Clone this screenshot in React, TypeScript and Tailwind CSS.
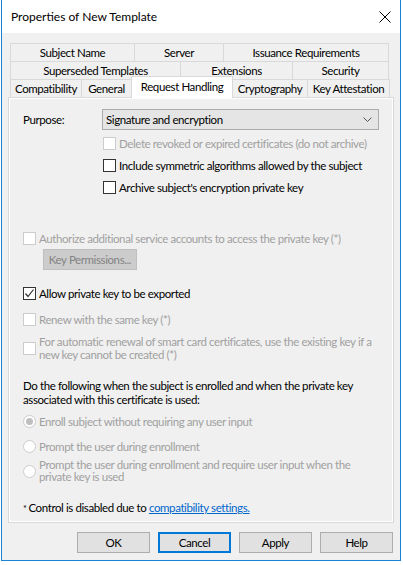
import { ReactNode } from 'react';

const FONT = "font-['Lato',sans-serif]";
const BODY = 'text-[11.5px] tracking-[-0.4px]';

function CheckBox({ checked, disabled }: { checked?: boolean; disabled?: boolean }) {
  return (
    <div
      className={`w-[13px] h-[13px] shrink-0 border bg-white flex items-center justify-center ${
        disabled ? 'border-[#cccccc]' : 'border-[#333333]'
      }`}
    >
      {checked && (
        <svg width="11" height="11" viewBox="0 0 11 11">
          <path d="M1.5 5.5 L4 8.5 L9.5 1.5" fill="none" stroke="#333" strokeWidth="1.2" />
        </svg>
      )}
    </div>
  );
}

function Radio({ checked }: { checked?: boolean }) {
  return (
    <div className="w-[13px] h-[13px] shrink-0 rounded-full border border-[#cccccc] bg-white flex items-center justify-center">
      {checked && <div className="w-[7px] h-[7px] rounded-full bg-[#bfbfbf]" />}
    </div>
  );
}

function CheckRow({
  children,
  checked,
  disabled,
  className = '',
}: {
  children: ReactNode;
  checked?: boolean;
  disabled?: boolean;
  className?: string;
}) {
  return (
    <div className={`flex items-center gap-[3px] ${className}`}>
      <CheckBox checked={checked} disabled={disabled} />
      <span className={`leading-[13px] whitespace-nowrap ${disabled ? 'text-[#a0a0a0]' : 'text-black'}`}>
        {children}
      </span>
    </div>
  );
}

function RadioRow({ children, checked, className = '' }: { children: ReactNode; checked?: boolean; className?: string }) {
  return (
    <div className={`flex items-center gap-[3px] text-[#a0a0a0] whitespace-nowrap ${className}`}>
      <Radio checked={checked} />
      <span className="leading-[12px]">{children}</span>
    </div>
  );
}

function Tab({ label, w, selected }: { label: string; w: number; selected?: boolean }) {
  return (
    <div
      style={{ width: w }}
      className={`flex items-center justify-center whitespace-nowrap border-l border-t border-r border-[#d9d9d9] -mr-px ${
        selected ? 'h-[22px] bg-white relative z-10 -mb-px pb-[3px]' : 'h-[18px] bg-[#f0f0f0]'
      }`}
    >
      {label}
    </div>
  );
}

function Button({ label, focused }: { label: string; focused?: boolean }) {
  return (
    <div
      className={`w-[73px] h-[21px] flex items-center justify-center bg-[#e1e1e1] ${
        focused ? 'border-2 border-[#0078d7]' : 'border border-[#adadad]'
      }`}
    >
      {label}
    </div>
  );
}

export default function App() {
  return (
    <div className={`w-[403px] h-[565px] bg-white overflow-hidden text-black leading-[13px] ${FONT}`}>
      <div className="ml-px w-[400px] h-[561px] border-x border-b border-[#1883d7] bg-[#f0f0f0] flex flex-col">
        {/* title bar */}
        <div className="h-[33px] bg-white flex items-center justify-between pl-[9px] pr-[9px] shrink-0">
          <span className="text-[12px]">Properties of New Template</span>
          <svg width="12" height="12" viewBox="0 0 12 12">
            <path d="M0.5 0.5 L11.5 11.5 M11.5 0.5 L0.5 11.5" stroke="#000" strokeWidth="1" />
          </svg>
        </div>

        <div className={`px-[6px] flex flex-col ${BODY}`}>
          {/* tabs */}
          <div className="mt-[10px] mx-[2px] flex flex-col">
            <div className="flex">
              <Tab label="Subject Name" w={125} />
              <Tab label="Server" w={90} />
              <Tab label="Issuance Requirements" w={166} />
            </div>
            <div className="flex">
              <Tab label="Superseded Templates" w={171} />
              <Tab label="Extensions" w={113} />
              <Tab label="Security" w={97} />
            </div>
            <div className="flex items-end h-[18px]">
              <Tab label="Compatibility" w={72} />
              <Tab label="General" w={51} />
              <Tab label="Request Handling" w={102} selected />
              <Tab label="Cryptography" w={76} />
              <Tab label="Key Attestation" w={83} />
            </div>
          </div>

          {/* panel */}
          <div className="h-[426px] border border-[#d9d9d9]">
            <div className="h-full border border-white bg-[#f0f0f0] pl-[13px] pr-[11px] pt-[10px] flex flex-col">
              <div className="flex items-center h-[21px]">
                <span className="w-[79px]">Purpose:</span>
                <div className="w-[277px] h-[21px] bg-[#e5e5e5] border border-[#acacac] flex items-center justify-between pl-[3px] pr-[6px]">
                  <span>Signature and encryption</span>
                  <svg width="9" height="6" viewBox="0 0 9 6">
                    <path d="M0.5 0.5 L4.5 4.5 L8.5 0.5" fill="none" stroke="#555" strokeWidth="1" />
                  </svg>
                </div>
              </div>

              <div className="ml-[80px] mt-[7px] flex flex-col gap-[9px]">
                <CheckRow disabled>Delete revoked or expired certificates (do not archive)</CheckRow>
                <CheckRow>Include symmetric algorithms allowed by the subject</CheckRow>
                <CheckRow>Archive subject's encryption private key</CheckRow>
              </div>

              <CheckRow disabled className="mt-[38px]">
                Authorize additional service accounts to access the private key (*)
              </CheckRow>
              <div className="ml-[20px] mt-[4px] w-[94px] h-[21px] bg-[#cccccc] border border-[#bfbfbf] text-[#838383] whitespace-nowrap flex items-center justify-center">
                Key Permissions...
              </div>

              <CheckRow checked className="mt-[17px]">
                Allow private key to be exported
              </CheckRow>
              <CheckRow disabled className="mt-[13px]">
                Renew with the same key (*)
              </CheckRow>
              <CheckRow disabled className="mt-[9px]">
                For automatic renewal of smart card certificates, use the existing key if a<br />
                new key cannot be created (*)
              </CheckRow>

              <div className="mt-[18px] leading-[14px] whitespace-nowrap">
                Do the following when the subject is enrolled and when the private key
                <br />
                associated with this certificate is used:
              </div>

              <RadioRow checked className="mt-[8px]">
                Enroll subject without requiring any user input
              </RadioRow>
              <RadioRow className="mt-[12px]">Prompt the user during enrollment</RadioRow>
              <RadioRow className="mt-[6px]">
                Prompt the user during enrollment and require user input when the
                <br />
                private key is used
              </RadioRow>

              <div className="mt-[18px] flex items-baseline whitespace-nowrap">
                <span className="text-[9px] mr-[2px]">*</span>
                <span>Control is disabled due to&nbsp;</span>
                <span className="text-[#0066cc] underline">compatibility settings.</span>
              </div>
            </div>
          </div>

          {/* buttons */}
          <div className="mt-[9px] flex justify-end gap-[8px] pr-[1px]">
            <Button label="OK" />
            <Button label="Cancel" focused />
            <Button label="Apply" />
            <Button label="Help" />
          </div>
        </div>
      </div>
    </div>
  );
}
